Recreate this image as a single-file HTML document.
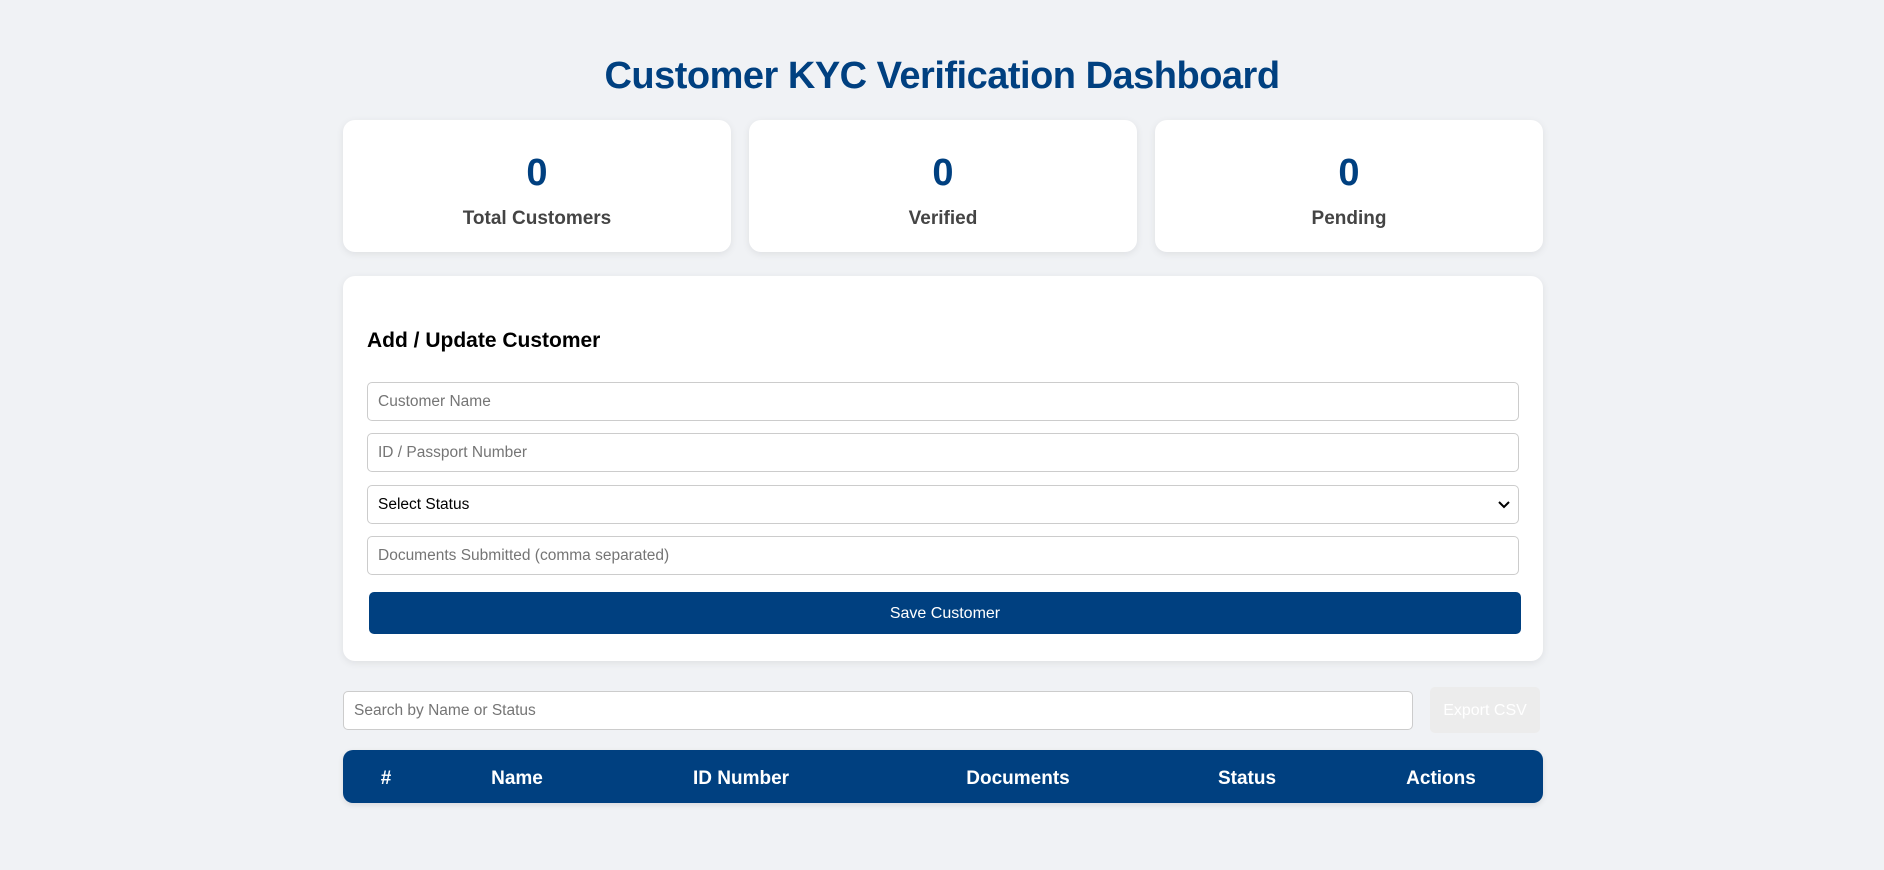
<!DOCTYPE html>
<html><head><style>
*{box-sizing:border-box;margin:0;padding:0}
body{width:1884px;height:870px;background:#f0f2f5;font-family:"Liberation Sans",sans-serif;position:relative;overflow:hidden}
.a{position:absolute}
h1{position:absolute;left:0;width:1884px;top:55px;text-align:center;color:#004080;font-size:38px;font-weight:bold;letter-spacing:-0.5px}
.card{position:absolute;top:120px;width:388px;height:132px;background:#fff;border-radius:12px;box-shadow:0 2px 8px rgba(0,0,0,.08);text-align:center}
.num{position:absolute;top:32px;width:100%;font-size:38px;font-weight:bold;color:#004080}
.lbl{position:absolute;top:88px;width:100%;font-size:19px;font-weight:bold;color:#444}
.form{left:343px;top:276px;width:1200px;height:385px;background:#fff;border-radius:12px;box-shadow:0 2px 8px rgba(0,0,0,.08)}
.inp{position:absolute;left:367px;width:1152px;height:39px;border:1px solid #ccc;border-radius:5px;background:#fff;font-size:15.5px;color:#757575;padding-left:10px;line-height:37px}
.btn{left:369px;top:592px;width:1152px;height:42px;background:#004080;color:#fff;border-radius:5px;text-align:center;line-height:44px;font-size:16px}
.th{top:750px;left:343px;width:1200px;height:53px;background:#004080;border-radius:10px;box-shadow:0 2px 6px rgba(0,0,0,.1)}
.th span{position:absolute;top:18px;color:#fff;font-weight:bold;font-size:19px;transform:translateX(-50%)}
</style></head><body>
<h1>Customer KYC Verification Dashboard</h1>
<div class="card" style="left:343px"><div class="num">0</div><div class="lbl">Total Customers</div></div>
<div class="card" style="left:749px"><div class="num">0</div><div class="lbl">Verified</div></div>
<div class="card" style="left:1155px"><div class="num">0</div><div class="lbl">Pending</div></div>
<div class="a form"></div>
<div class="a" style="left:367px;top:329px;font-size:21px;font-weight:bold;color:#000">Add / Update Customer</div>
<div class="inp" style="top:382px">Customer Name</div>
<div class="inp" style="top:433px">ID / Passport Number</div>
<div class="inp" style="top:485px;color:#000;">Select Status<svg class="a" style="right:8px;top:14px" width="12" height="10" viewBox="0 0 12 10"><path d="M1 2l5 5 5-5" stroke="#000" stroke-width="2" fill="none"/></svg></div>
<div class="inp" style="top:536px">Documents Submitted (comma separated)</div>
<div class="a btn">Save Customer</div>
<div class="inp" style="left:343px;top:691px;width:1070px;height:39px">Search by Name or Status</div>
<div class="a" style="left:1430px;top:687px;width:110px;height:46px;background:#ececec;border-radius:5px;color:#fff;font-size:16px;text-align:center;line-height:48px">Export CSV</div>
<div class="a th"><span style="left:43px">#</span><span style="left:174px">Name</span><span style="left:398px">ID Number</span><span style="left:675px">Documents</span><span style="left:904px">Status</span><span style="left:1098px">Actions</span></div>
</body></html>
